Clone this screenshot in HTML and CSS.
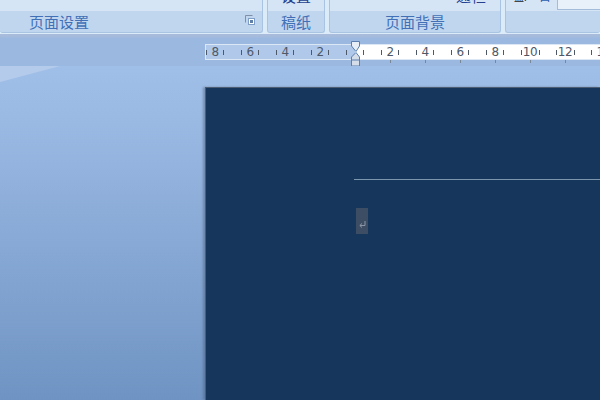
FILE: index.html
```html
<!DOCTYPE html>
<html lang="zh-CN">
<head>
<meta charset="utf-8">
<title>页面设置</title>
<link rel="stylesheet" href="styles.css">
</head>
<body>
<div class="ribbon">
  <section class="group group-setup">
    <div class="pane"></div>
    <div class="label label-left">页面设置</div>
    <svg class="launcher" width="11" height="11" viewBox="0 0 11 11"><path d="M.5.5h7M.5.5v7" stroke="#7f8fa8" fill="none"/><rect x="3.5" y="3.5" width="6" height="6" fill="#fff" stroke="#7f9fc8"/><rect x="5" y="5" width="3" height="3" fill="#5f7fa8"/></svg>
  </section>
  <section class="group group-draft">
    <div class="pane"><span class="clipped blue">设置</span></div>
    <div class="label">稿纸</div>
  </section>
  <section class="group group-bg">
    <div class="pane pane-end"><span class="clipped blue">通栏</span></div>
    <div class="label">页面背景</div>
  </section>
  <section class="group group-last">
    <div class="pane pane-last"><span class="clipped dark">孟:</span><span class="clipped mid">目</span><span class="field"></span></div>
    <div class="label"></div>
  </section>
</div>
<div class="ruler-row">
  <div class="ruler">
    <div class="seg seg-margin">
      <span class="cell"><i></i><b>8</b><i></i></span>
      <span class="cell"><i></i><b>6</b><i></i></span>
      <span class="cell"><i></i><b>4</b><i></i></span>
      <span class="cell"><i></i><b>2</b><i></i></span>
      <span class="half"><i></i></span>
    </div>
    <div class="seg seg-text">
      <span class="half"><i></i></span>
      <span class="cell"><i></i><b>2</b><i></i></span>
      <span class="cell"><i></i><b>4</b><i></i></span>
      <span class="cell"><i></i><b>6</b><i></i></span>
      <span class="cell"><i></i><b>8</b><i></i></span>
      <span class="cell"><i></i><b>10</b><i></i></span>
      <span class="cell"><i></i><b>12</b><i></i></span>
      <span class="cell"><i></i><b>1</b><i></i></span>
    </div>
    <svg class="marker" width="10" height="26" viewBox="0 0 10 26">
      <path d="M.5.5h8v4.500L5 10.500 .5 5z" fill="#e8eef6" stroke="#5b7fae"/>
      <path d="M5 11.500l3.500 4.500v9h-8v-9z" fill="#d5dde8" stroke="#5b7fae"/>
      <path d="M.5 19h8" stroke="#5b7fae"/>
    </svg>
  </div>
</div>
<main class="workspace">
  <div class="shine"></div>
  <div class="page">
    <div class="header-line"></div>
    <div class="para">
      <svg width="9" height="9" viewBox="0 0 9 9"><path d="M7 1v4.500H2M4 3.500L1.800 5.500 4 7.500" fill="none" stroke="#8a96a6"/></svg>
    </div>
  </div>
</main>
</body>
</html>
```
FILE: styles.css
```css
html, body { margin: 0; padding: 0; }
body {
  width: 600px;
  height: 400px;
  overflow: hidden;
  font-family: "Noto Sans CJK SC", "Liberation Sans", sans-serif;
  background: #9bb9e0;
}
.ribbon {
  height: 34px;
  display: flex;
  gap: 4px;
  background: #dbebf8;
  overflow: hidden;
}
.group {
  position: relative;
  height: 33px;
  box-sizing: border-box;
  border: 1px solid #a9c4e2;
  border-top: 0;
  border-radius: 0 0 3px 3px;
  background: #c0d6ef;
  display: flex;
  flex-direction: column;
}
.group-setup { width: 263px; border-left: 0; }
.group-draft { width: 58px; }
.group-bg { width: 172px; }
.group-last { flex: 1; border-right: 0; }
.pane {
  height: 11px;
  background: #d6e5f5;
  overflow: hidden;
  position: relative;
  display: flex;
  justify-content: center;
}
.pane-end { justify-content: flex-end; padding-right: 14px; }
.pane-last { justify-content: flex-start; padding-left: 8px; }
.clipped {
  font-size: 15px;
  line-height: 15px;
  margin-top: -12px;
  white-space: nowrap;
}
.blue { color: #24408f; }
.dark { color: #222; font-size: 10px; line-height: 10px; margin-top: -8px; width: 25px; }
.mid { color: #2a5db0; font-size: 12px; line-height: 12px; margin-top: -10px; }
.field {
  width: 42px;
  height: 9px;
  margin-left: auto;
  background: #e8f0fa;
  border: 1px solid #a3bcd9;
  border-top: 0;
  border-right: 0;
}
.label {
  height: 22px;
  line-height: 21px;
  font-size: 15px;
  color: #4270b6;
  text-align: center;
  white-space: nowrap;
}
.label-left { text-align: left; padding-left: 29px; }
.launcher { position: absolute; right: 6px; top: 15px; }
.ruler-row {
  height: 32px;
  box-sizing: border-box;
  padding: 10px 0 0 205px;
  background: linear-gradient(#aabcdb 0, #a4bbdd 3px, #9bb9e0 4px);
}
.ruler {
  position: relative;
  display: flex;
  height: 16px;
}
.seg {
  display: flex;
  align-items: center;
  height: 16px;
  box-sizing: border-box;
  overflow: hidden;
  color: #4f5866;
  font-size: 12px;
  font-family: "DejaVu Sans", sans-serif;
}
.seg-margin {
  width: 150px;
  flex: none;
  justify-content: flex-end;
  background: #b0c8ea;
  border: 1px solid #dbe7f5;
  border-right: 0;
}
.seg-text {
  flex: 1;
  max-width: 245px;
  height: 21px;
  align-items: flex-start;
  background: linear-gradient(#dbe7f5 1px, #fff 1px, #fff 15px, #dbe7f5 15px, #dbe7f5 16px, transparent 16px);
}
.cell {
  position: relative;
  flex: none;
  width: 35px;
  display: flex;
  justify-content: space-between;
  align-items: center;
  padding: 0 8px;
  box-sizing: border-box;
}
.seg-text .cell, .seg-text .half { height: 16px; }
.half {
  flex: none;
  width: 17.5px;
  display: flex;
  align-items: center;
  justify-content: center;
}
.cell b { font-weight: 400; line-height: 14px; letter-spacing: -.5px; }
.cell i, .half i {
  display: block;
  width: 1px;
  height: 5px;
  background: #4f5866;
}
.seg-text .cell::after {
  content: "";
  position: absolute;
  left: 17px;
  top: 16px;
  width: 1px;
  height: 3px;
  background: #7a8796;
}
.marker { position: absolute; left: 146px; top: -3px; }
.workspace {
  position: relative;
  height: 334px;
  box-sizing: border-box;
  padding: 21px 0 0 205px;
  background: linear-gradient(#a0bfe8, #94b3de 30%, #6f94c3);
  overflow: hidden;
}
.shine {
  position: absolute;
  left: 0;
  top: 0;
  width: 60px;
  height: 16px;
  background: #b4cbec;
  clip-path: polygon(0 0, 100% 0, 0 100%);
}
.page {
  height: 313px;
  box-sizing: border-box;
  padding: 91px 0 0 148px;
  background: #16365c;
  border-top: 1px solid #4d5d72;
  border-left: 1px solid #4d5d72;
  box-shadow: -2px 0 2px rgba(70, 90, 120, .45);
}
.header-line {
  height: 1px;
  background: #7c97ad;
}
.para {
  width: 12px;
  height: 26px;
  margin: 28px 0 0 2px;
  background: #3d4e64;
  display: flex;
  align-items: center;
  justify-content: center;
  padding-top: 6px;
  box-sizing: border-box;
}
```
